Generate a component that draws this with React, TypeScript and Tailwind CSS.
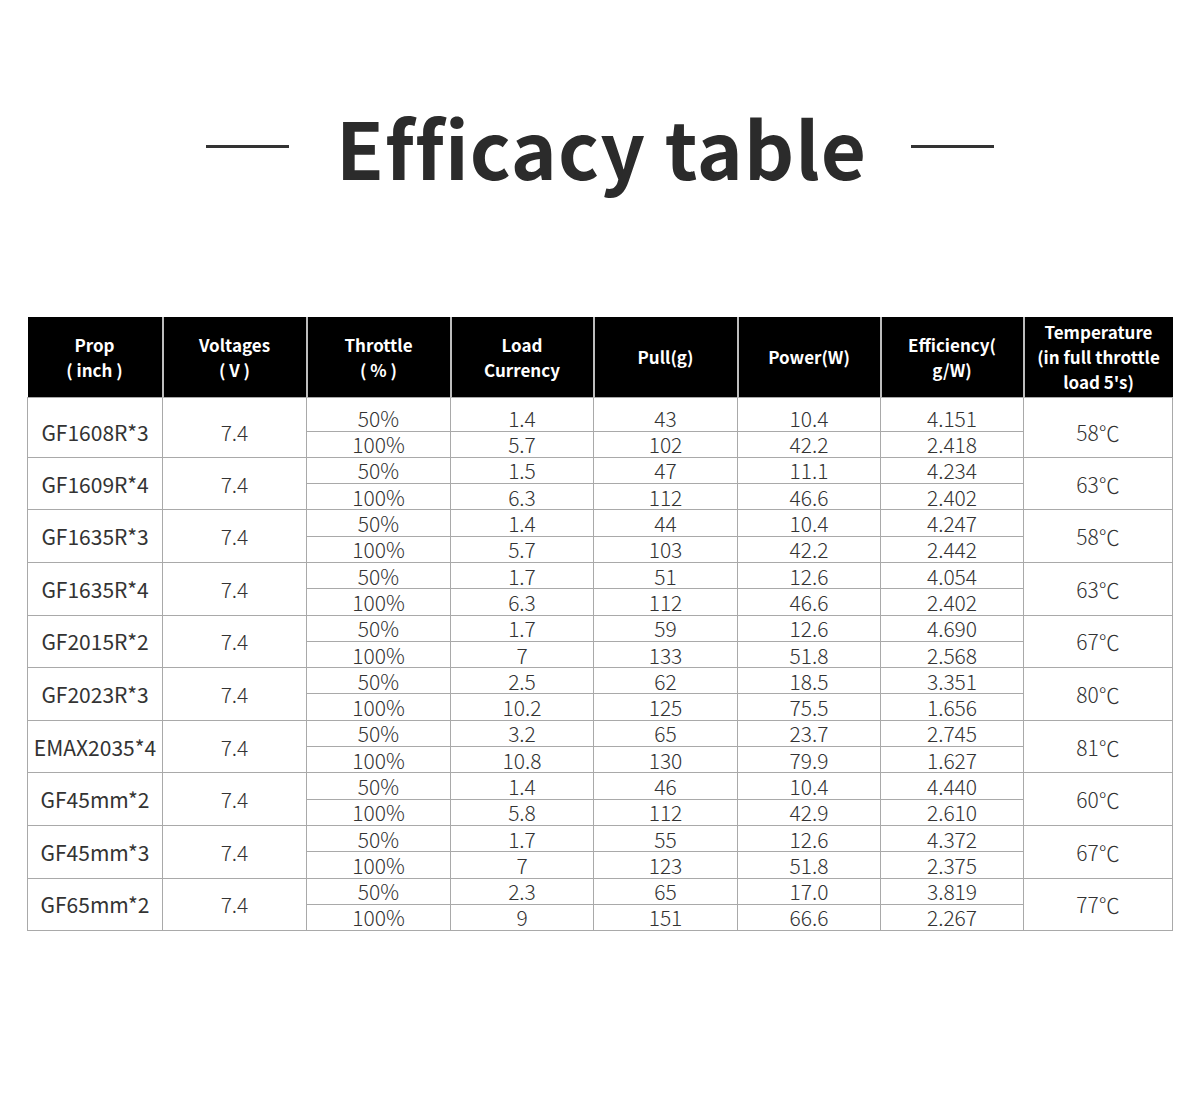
import React from "react";

type Row = {
  prop: string;
  temp: string;
  half: [string, string, string, string, string];
  full: [string, string, string, string, string];
};

const rows: Row[] = [
  { prop: "GF1608R*3", temp: "58℃", half: ["50%", "1.4", "43", "10.4", "4.151"], full: ["100%", "5.7", "102", "42.2", "2.418"] },
  { prop: "GF1609R*4", temp: "63℃", half: ["50%", "1.5", "47", "11.1", "4.234"], full: ["100%", "6.3", "112", "46.6", "2.402"] },
  { prop: "GF1635R*3", temp: "58℃", half: ["50%", "1.4", "44", "10.4", "4.247"], full: ["100%", "5.7", "103", "42.2", "2.442"] },
  { prop: "GF1635R*4", temp: "63℃", half: ["50%", "1.7", "51", "12.6", "4.054"], full: ["100%", "6.3", "112", "46.6", "2.402"] },
  { prop: "GF2015R*2", temp: "67℃", half: ["50%", "1.7", "59", "12.6", "4.690"], full: ["100%", "7", "133", "51.8", "2.568"] },
  { prop: "GF2023R*3", temp: "80℃", half: ["50%", "2.5", "62", "18.5", "3.351"], full: ["100%", "10.2", "125", "75.5", "1.656"] },
  { prop: "EMAX2035*4", temp: "81℃", half: ["50%", "3.2", "65", "23.7", "2.745"], full: ["100%", "10.8", "130", "79.9", "1.627"] },
  { prop: "GF45mm*2", temp: "60℃", half: ["50%", "1.4", "46", "10.4", "4.440"], full: ["100%", "5.8", "112", "42.9", "2.610"] },
  { prop: "GF45mm*3", temp: "67℃", half: ["50%", "1.7", "55", "12.6", "4.372"], full: ["100%", "7", "123", "51.8", "2.375"] },
  { prop: "GF65mm*2", temp: "77℃", half: ["50%", "2.3", "65", "17.0", "3.819"], full: ["100%", "9", "151", "66.6", "2.267"] },
];

const headers: React.ReactNode[] = [
  <>Prop<br />(&nbsp;inch&nbsp;)</>,
  <>Voltages<br />(&nbsp;V&nbsp;)</>,
  <>Throttle<br />(&nbsp;%&nbsp;)</>,
  <>Load<br />Currency</>,
  <>Pull(g)</>,
  <>Power(W)</>,
  <>Efficiency(<br />g/W)</>,
  <>Temperature<br />(in full throttle<br />load 5's)</>,
];

const widths = ["w-[135px]", "w-[144px]", "w-[144px]", "w-[143px]", "w-[144px]", "w-[143px]", "w-[143px]", "w-[149px]"];

const cell = "border border-[#a9a9a9] text-center p-0 leading-[22px]";

export default function App() {
  return (
    <div
      className="w-[1200px] h-[1099px] bg-white text-[#333]"
      style={{ fontFamily: '"Noto Sans CJK SC", "Noto Sans", sans-serif' }}
    >
      <div className="flex items-center justify-center pt-[96px] h-[196px]">
        <div className="w-[83px] h-[3px] bg-[#333]" />
        <h1 className="ml-[47px] mr-[44px] text-[78px] font-bold leading-none text-[#2b2b2b] tracking-[1px]">Efficacy table</h1>
        <div className="w-[83px] h-[3px] bg-[#333]" />
      </div>

      <div className="pt-[121px] pl-[27px]">
        <table className="table-fixed border-collapse w-[1145px]">
          <colgroup>
            {widths.map((w, i) => (
              <col key={i} className={w} />
            ))}
          </colgroup>
          <thead>
            <tr className="h-[80px] bg-black">
              {headers.map((h, i) => (
                <th
                  key={i}
                  className={`text-white font-bold text-[17px] leading-[25px] text-center align-middle p-0 ${
                    i < 7 ? "border-r-2 border-r-[#bdbdbd]" : ""
                  }`}
                >
                  {h}
                </th>
              ))}
            </tr>
          </thead>
          <tbody className="text-[21px] font-light text-[#333]">
            {rows.map((r, gi) => {
              const first = gi === 0;
              const topH = first ? "h-[34px]" : "h-[26.3px]";
              return (
                <React.Fragment key={r.prop}>
                  <tr className={topH}>
                    <td rowSpan={2} className={`${cell} font-normal ${first ? "pt-[10px]" : ""}`}>
                      {r.prop}
                    </td>
                    <td rowSpan={2} className={`${cell} ${first ? "pt-[10px]" : ""}`}>7.4</td>
                    {r.half.map((v, i) => (
                      <td key={i} className={`${cell} ${first ? "align-bottom pb-[2px]" : ""}`}>
                        {v}
                      </td>
                    ))}
                    <td rowSpan={2} className={`${cell} ${first ? "pt-[10px]" : ""}`}>{r.temp}</td>
                  </tr>
                  <tr className="h-[26.3px]">
                    {r.full.map((v, i) => (
                      <td key={i} className={cell}>
                        {v}
                      </td>
                    ))}
                  </tr>
                </React.Fragment>
              );
            })}
          </tbody>
        </table>
      </div>
    </div>
  );
}
